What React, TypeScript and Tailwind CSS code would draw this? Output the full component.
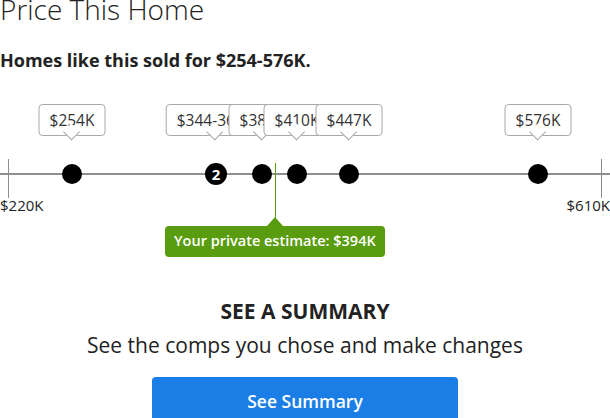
import React from "react";

type Comp = { x: number; label: string; count?: number };

const comps: Comp[] = [
  { x: 72, label: "$254K" },
  { x: 215, label: "$344-360K", count: 2 },
  { x: 262, label: "$386K" },
  { x: 297, label: "$410K" },
  { x: 349, label: "$447K" },
  { x: 538, label: "$576K" },
];

function Tooltip({ x, label }: { x: number; label: string }) {
  return (
    <div
      className="absolute top-[14px] -translate-x-1/2 h-[32px] px-[10px] border border-[#a8a8a8] rounded-[4px] bg-white text-[15.5px] leading-[30px] text-[#333] whitespace-nowrap"
      style={{ left: x }}
    >
      {label}
      <div className="absolute left-1/2 top-[21px] -ml-[6px] w-[12px] h-[12px] rotate-45 bg-white border-r border-b border-[#a8a8a8]" />
    </div>
  );
}

export default function App() {
  return (
    <div className="w-[610px] h-[418px] overflow-hidden bg-white font-['Open_Sans',sans-serif] text-[#222]">
      <h1 className="mt-[-5px] text-[28px] leading-[28px] font-light text-[#222] whitespace-nowrap">
        Price This Home
      </h1>
      <p className="mt-[28px] text-[18px] leading-[18px] font-bold text-[#222] whitespace-nowrap">
        Homes like this sold for $254-576K.
      </p>

      <div className="relative mt-[21px] h-[175px]">
        {/* axis */}
        <div className="absolute left-0 right-0 top-[83px] h-[2px] bg-[#8e8e8e]" />
        <div className="absolute left-[8px] top-[69px] w-[1px] h-[39px] bg-[#8e8e8e]" />
        <div className="absolute left-[601px] top-[69px] w-[1px] h-[39px] bg-[#8e8e8e]" />
        <div className="absolute left-0 top-[108px] text-[15px] leading-[14px] text-[#222]">$220K</div>
        <div className="absolute right-0 top-[108px] text-[15px] leading-[14px] text-[#222]">$610K</div>

        {/* tooltips */}
        {comps.map((c) => (
          <Tooltip key={c.label} x={c.x} label={c.label} />
        ))}

        {/* dots */}
        {comps.map((c) =>
          c.count ? (
            <div
              key={c.label + "d"}
              className="absolute top-[73px] -translate-x-1/2 w-[22px] h-[22px] rounded-full bg-black text-white text-[15px] font-bold leading-[22px] text-center"
              style={{ left: c.x + 1 }}
            >
              {c.count}
            </div>
          ) : (
            <div
              key={c.label + "d"}
              className="absolute top-[74px] -translate-x-1/2 w-[20px] h-[20px] rounded-full bg-black"
              style={{ left: c.x }}
            />
          )
        )}

        {/* private estimate */}
        <div className="absolute left-[275px] top-[73px] w-[1px] h-[56px] bg-[#5a9c10]" />
        <div className="absolute left-[165px] top-[136px] h-[31px] px-[9px] pt-[5px] rounded-[4px] bg-[#5a9c10] text-white text-[14.5px] leading-[20px] font-semibold whitespace-nowrap">
          Your private estimate: $394K
          <div className="absolute left-[102px] top-[-9px] w-0 h-0 border-l-[8px] border-r-[8px] border-b-[9px] border-l-transparent border-r-transparent border-b-[#5a9c10]" />
        </div>
      </div>

      <div className="flex flex-col items-center">
        <h2 className="mt-[34px] text-[21px] leading-[24px] font-bold text-[#222]">SEE A SUMMARY</h2>
        <p className="mt-[10px] text-[21px] leading-[24px] text-[#222]">See the comps you chose and make changes</p>
        <button className="mt-[20px] w-[306px] h-[44px] pt-[3px] rounded-[4px] bg-[#1a7ee6] text-white text-[17.5px] leading-[24px] font-semibold text-center">
          <span className="block">See Summary</span>
        </button>
      </div>
    </div>
  );
}
